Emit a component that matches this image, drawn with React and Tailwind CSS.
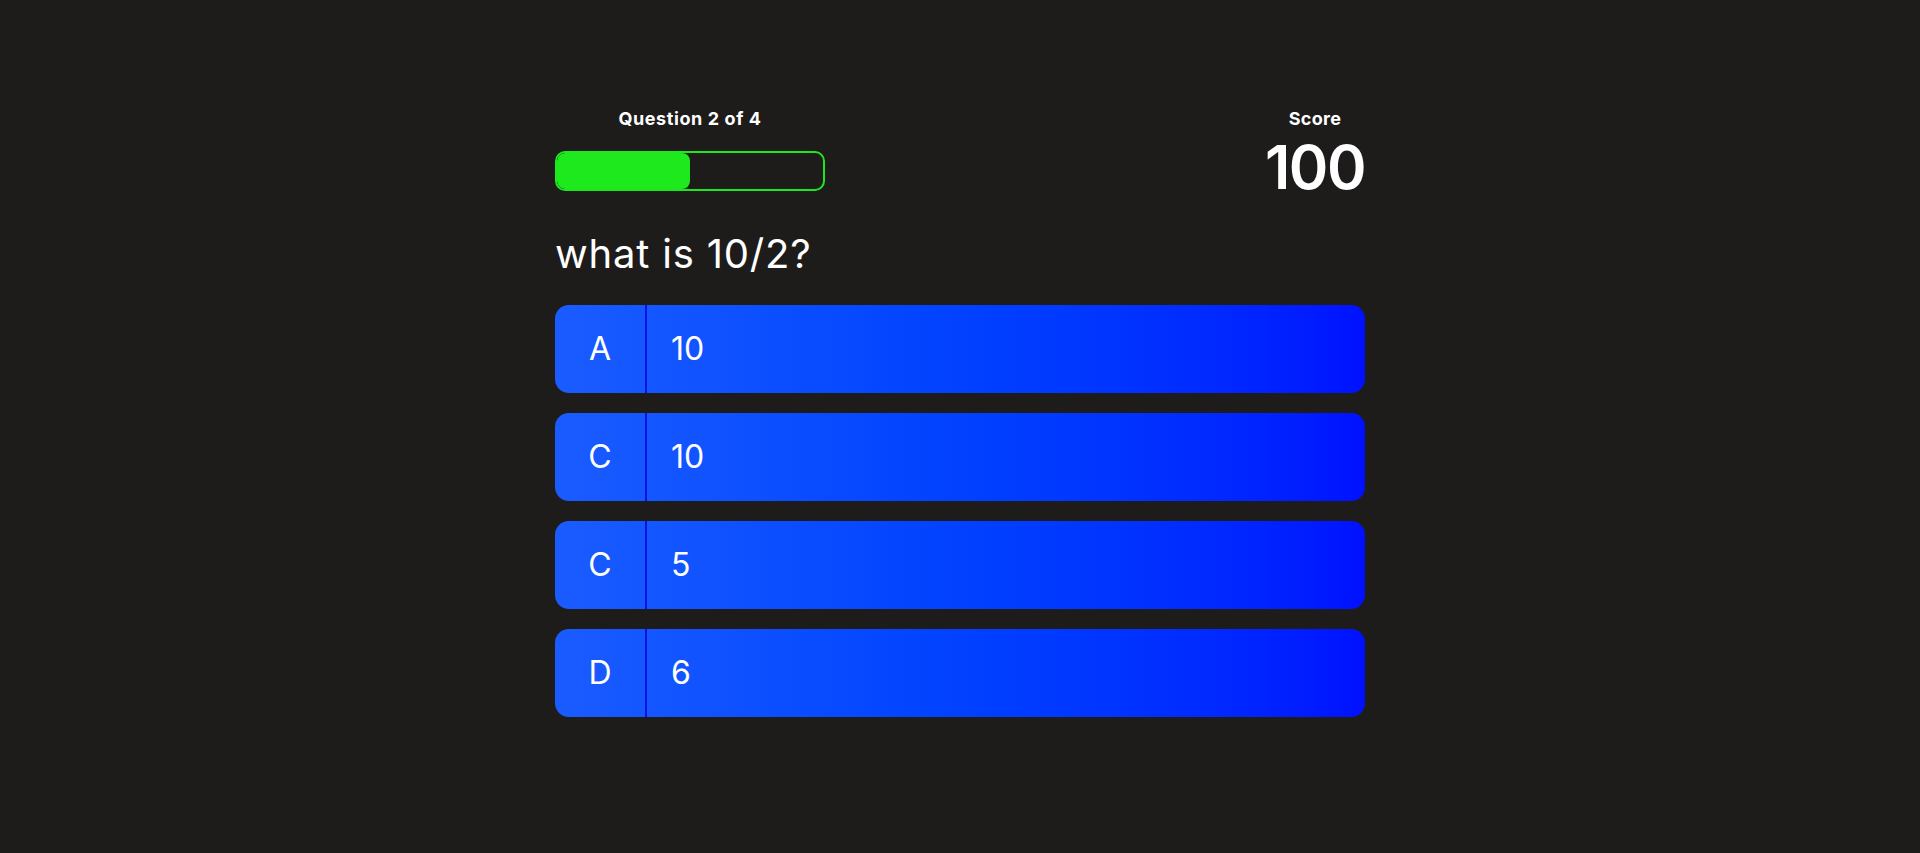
import React from "react";

const options = [
  { letter: "A", text: "10" },
  { letter: "C", text: "10" },
  { letter: "C", text: "5" },
  { letter: "D", text: "6" },
];

export default function App() {
  return (
    <div className="min-h-screen w-full bg-[#1d1c1b] flex justify-center font-['Inter','Noto_Sans',sans-serif] text-white">
      <div className="w-[810px] pt-[107px]">
        <div className="flex justify-between items-start">
          <div className="flex flex-col items-center w-[270px]">
            <div className="text-[18px] leading-[24px] font-bold tracking-[0.6px]">Question 2 of 4</div>
            <div className="mt-[20px] w-[270px] h-[40px] rounded-[10px] border-2 border-[#1ee61e] overflow-hidden">
              <div className="w-1/2 h-full rounded-[8px] bg-[#1de91d]" />
            </div>
          </div>
          <div className="flex flex-col items-center w-[100px]">
            <div className="text-[18px] leading-[24px] font-bold tracking-[0.3px]">Score</div>
            <div className="mt-[6px] text-[60px] leading-[60px] font-semibold tracking-tight">100</div>
          </div>
        </div>
        <h1 className="mt-[33px] mb-[27px] text-[40px] leading-[48px] font-normal tracking-[0.8px]">what is 10/2?</h1>
        <div className="flex flex-col gap-[20px]">
          {options.map((o, i) => (
            <div
              key={i}
              className="h-[88px] rounded-[14px] bg-linear-to-r from-[#1a5cff] to-[#0010ff] flex items-stretch overflow-hidden"
            >
              <div className="w-[92px] border-r-2 border-[#0a10e8] flex items-center justify-center text-[32px]">
                {o.letter}
              </div>
              <div className="flex items-center pl-[24px] text-[32px]">{o.text}</div>
            </div>
          ))}
        </div>
      </div>
    </div>
  );
}
